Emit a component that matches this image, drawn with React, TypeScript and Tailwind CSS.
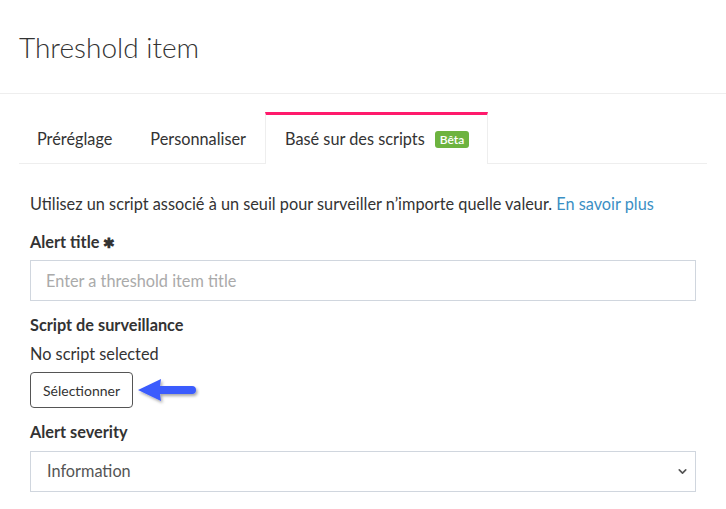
import { ChevronDown } from "lucide-react";

const font = { fontFamily: '"Source Sans Pro", Lato, "Noto Sans", sans-serif' };

function Tabs() {
  return (
    <div className="flex items-end border-b border-[#eeeeee] mx-[19px] h-[52px] text-[16.3px] text-[#333]">
      <div className="pl-[18px] pr-[19px] h-[48px] flex items-center">Préréglage</div>
      <div className="pl-[19px] pr-[19px] h-[48px] flex items-center">Personnaliser</div>
      <div className="relative -mb-px h-[52px] border-t-[3px] border-t-[#ff1a6c] border-x border-x-[#eeeeee] bg-white pl-[19px] pr-[18px] flex items-center gap-[10px]">
        <span>Basé sur des scripts</span>
        <span className="rounded-[3px] bg-[#6db33f] px-[5px] text-[12px] leading-[17px] font-semibold text-white">Bêta</span>
      </div>
    </div>
  );
}

export default function App() {
  return (
    <div className="w-[726px] h-[509px] bg-white overflow-hidden" style={font}>
      <div className="h-[94px] border-b border-[#eeeeee] flex items-center px-[19px]">
        <h1 className="text-[28px] font-light text-[#333] mt-[1px]">Threshold item</h1>
      </div>
      <div className="pt-[18px]">
        <Tabs />
      </div>
      <div className="px-[30px] pt-[29px] text-[#333] text-[16.3px]">
        <p className="leading-[22px]">
          Utilisez un script associé à un seuil pour surveiller n’importe quelle valeur.{" "}
          <a className="text-[#3b8fc4]">En savoir plus</a>
        </p>
        <label className="block mt-[16px] leading-[22px] font-bold">
          Alert title <span className="text-[14px]">✱</span>
        </label>
        <input
          className="mt-[6px] block w-[666px] h-[41px] border border-[#d0d6de] px-[15px] placeholder:text-[#aaa] outline-none"
          placeholder="Enter a threshold item title"
        />
        <div className="mt-[13px] leading-[22px] font-bold">Script de surveillance</div>
        <div className="mt-[7px] leading-[22px]">No script selected</div>
        <div className="mt-[7px] flex items-center gap-[3px]">
          <button className="h-[36px] px-[12px] border border-[#555] rounded-[4px] text-[14px] text-[#333] bg-white">
            Sélectionner
          </button>
          <svg width="64" height="30" viewBox="0 0 64 30" className="mt-[2px]">
            <defs>
              <filter id="sh" x="-20%" y="-40%" width="150%" height="200%">
                <feDropShadow dx="1.5" dy="2" stdDeviation="1.5" floodColor="#000" floodOpacity="0.35" />
              </filter>
            </defs>
            <g filter="url(#sh)">
              <path d="M2 14 L25 3 L24 10 L56 10 A4 4 0 0 1 56 18 L24 18 L25 25 Z" fill="#3b5bfd" />
            </g>
          </svg>
        </div>
        <div className="mt-[13px] leading-[22px] font-bold">Alert severity</div>
        <div className="mt-[8px] w-[666px] h-[41px] border border-[#d0d6de] flex items-center justify-between pl-[16px] pr-[6px] text-[#555]">
          <span>Information</span>
          <ChevronDown size={13} strokeWidth={3} className="text-[#555]" />
        </div>
      </div>
    </div>
  );
}
